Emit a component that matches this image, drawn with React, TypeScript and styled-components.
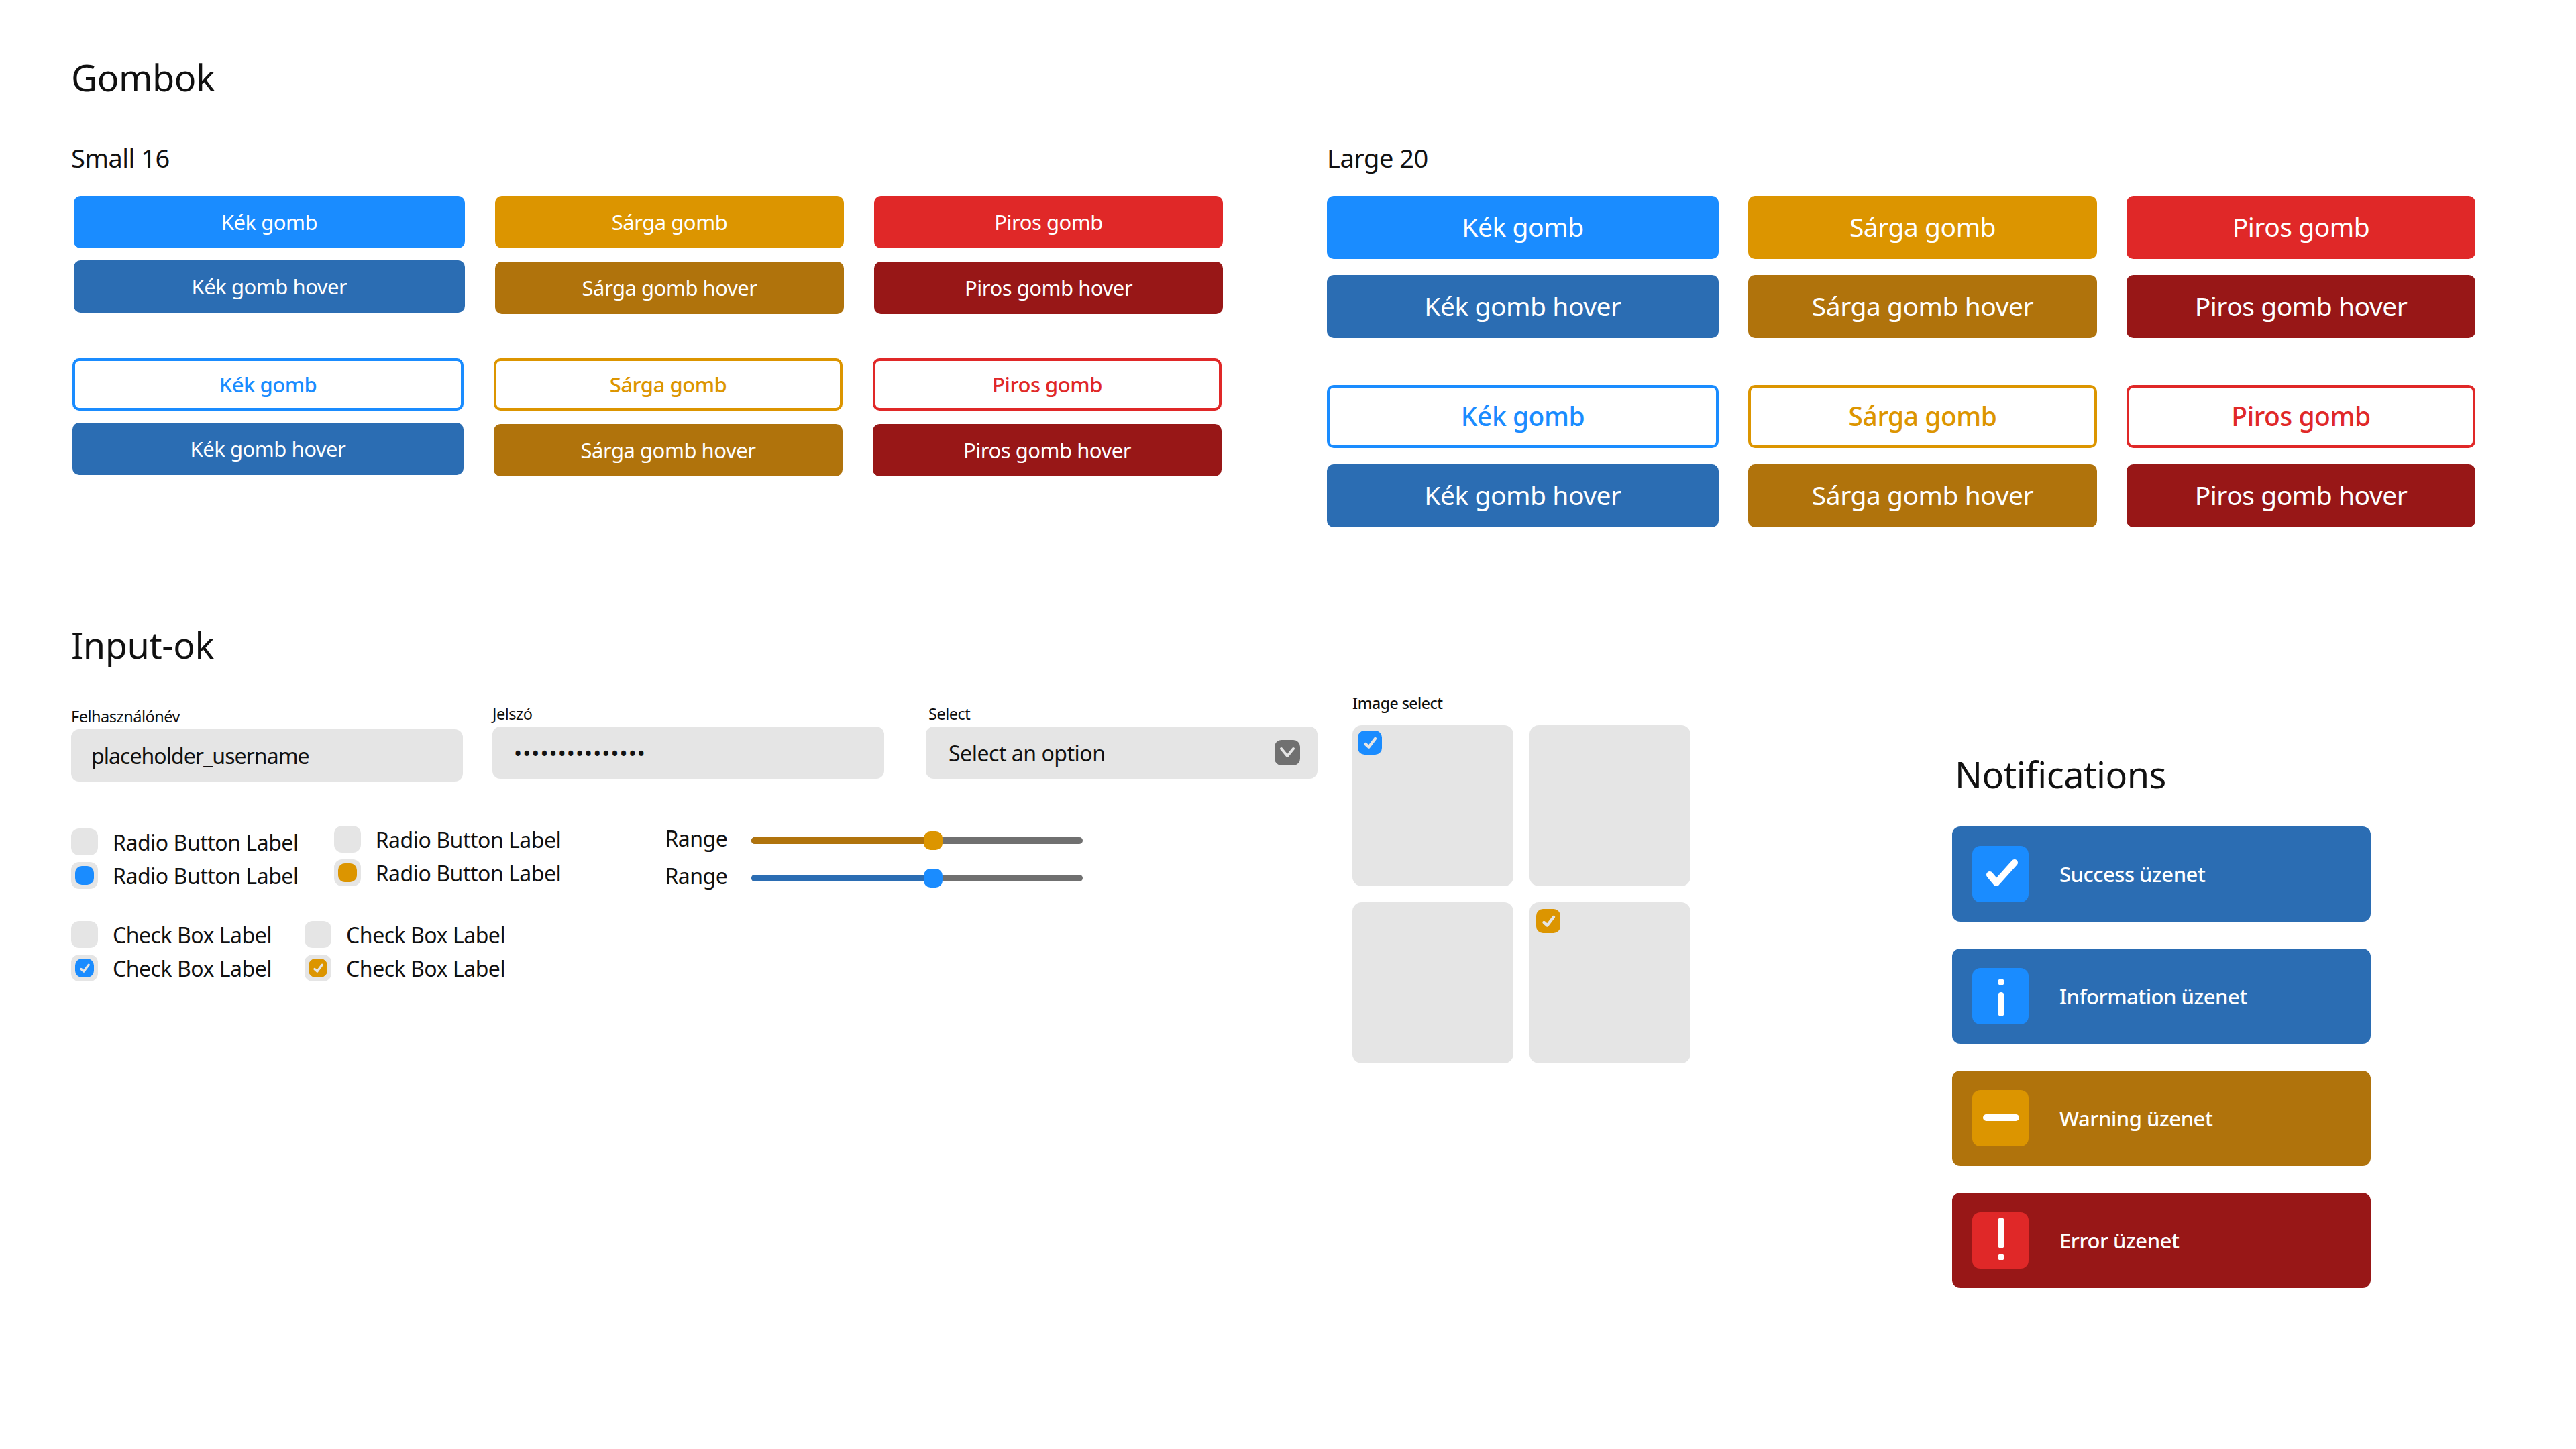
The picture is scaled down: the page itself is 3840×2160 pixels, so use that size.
import { createGlobalStyle, styled } from 'styled-components'

const BLUE = '#1a8cff'
const BLUE_DARK = '#2b6db3'
const YELLOW = '#dc9500'
const YELLOW_DARK = '#b0730c'
const RED = '#e02828'
const RED_DARK = '#981717'
const GRAY = '#e5e5e5'
const TRACK = '#707070'

const GlobalStyle = createGlobalStyle`
  html, body {
    margin: 0;
    background: #fff;
  }
  body {
    font-family: 'Noto Sans', 'Open Sans', sans-serif;
    color: #111;
    letter-spacing: -0.03em;
  }
  * {
    box-sizing: border-box;
  }
`

const Page = styled.div`
  width: 3840px;
  height: 2160px;
  padding-top: 82px;
  overflow: hidden;
`

const Title = styled.h2<{ $left?: number }>`
  margin: 0 0 0 ${(p) => p.$left ?? 106}px;
  font-size: 54px;
  line-height: 66px;
  font-weight: 400;
`

const ButtonArea = styled.div`
  display: flex;
  margin-top: 62px;
`

const SmallColumn = styled.div`
  width: 1872px;
  margin-left: 106px;
`

const LargeColumn = styled.div`
  width: 1712px;
`

const SizeLabel = styled.h3`
  margin: 0 0 32px;
  font-size: 38px;
  line-height: 50px;
  font-weight: 400;
`

const ButtonGroup = styled.div<{ $gap: number; $shift?: number; $top?: number }>`
  display: flex;
  gap: ${(p) => p.$gap}px;
  margin-left: ${(p) => p.$shift ?? 0}px;
  margin-top: ${(p) => p.$top ?? 0}px;
`

const ButtonStack = styled.div<{ $gap: number }>`
  display: flex;
  flex-direction: column;
  gap: ${(p) => p.$gap}px;
`

const Button = styled.button<{ $w: number; $h: number; $size: number; $bg: string; $outline?: boolean }>`
  width: ${(p) => p.$w}px;
  height: ${(p) => p.$h}px;
  padding: 0 0 ${(p) => (p.$size > 32 ? 3 : 0)}px;
  border: 4px solid ${(p) => p.$bg};
  border-radius: 10px;
  background: ${(p) => (p.$outline ? '#fff' : p.$bg)};
  color: ${(p) => (p.$outline ? p.$bg : '#fff')};
  font-family: inherit;
  letter-spacing: inherit;
  font-size: ${(p) => p.$size}px;
  font-weight: ${(p) => (p.$outline ? 500 : 400)};
`

const InputTitleWrap = styled.div`
  margin-top: 142px;
`

const LowerRow = styled.div`
  display: flex;
  align-items: flex-start;
  margin-top: 31px;
`

const Controls = styled.div`
  width: 1910px;
  margin-left: 106px;
  padding-top: 24px;
`

const Fields = styled.div`
  display: flex;
  align-items: flex-start;
`

const Field = styled.div<{ $left?: number; $top?: number; $labelLeft?: number }>`
  width: 584px;
  margin-left: ${(p) => p.$left ?? 0}px;
  margin-top: ${(p) => p.$top ?? 0}px;
  label {
    margin-left: ${(p) => p.$labelLeft ?? 0}px;
  }
`

const FieldLabel = styled.label`
  display: block;
  height: 30px;
  margin-bottom: 4px;
  font-size: 23.5px;
  line-height: 30px;
`

const TextInput = styled.input<{ $dots?: boolean }>`
  display: block;
  width: 100%;
  height: 78px;
  padding: 0 0 0 ${(p) => (p.$dots ? 32 : 30)}px;
  border: 0;
  border-radius: 12px;
  outline: 0;
  background: ${GRAY};
  color: #111;
  font-family: inherit;
  font-size: 32px;
  letter-spacing: ${(p) => (p.$dots ? '1.1px' : '-0.03em')};
`

const SelectBox = styled.div`
  display: flex;
  align-items: center;
  justify-content: space-between;
  height: 78px;
  padding: 0 26px 0 34px;
  border-radius: 12px;
  background: ${GRAY};
  font-size: 32px;
`

const SelectArrow = styled.span`
  display: flex;
  align-items: center;
  justify-content: center;
  width: 38px;
  height: 38px;
  border-radius: 10px;
  background: ${TRACK};
`

const OptionRows = styled.div`
  display: flex;
  align-items: flex-start;
`

const OptionColumn = styled.div<{ $left?: number; $top: number }>`
  display: flex;
  flex-direction: column;
  gap: 10px;
  margin-left: ${(p) => p.$left ?? 0}px;
  margin-top: ${(p) => p.$top}px;
`

const OptionRow = styled.div`
  display: flex;
  align-items: center;
  gap: 22px;
  height: 40px;
  font-size: 32px;
  white-space: nowrap;
`

const OptionBox = styled.span`
  display: flex;
  align-items: center;
  justify-content: center;
  flex: none;
  width: 40px;
  height: 40px;
  border-radius: 12px;
  background: ${GRAY};
`

const OptionInner = styled.span<{ $color: string }>`
  display: flex;
  align-items: center;
  justify-content: center;
  width: 28px;
  height: 28px;
  border-radius: 10px;
  background: ${(p) => p.$color};
`

const RangeColumn = styled.div`
  display: flex;
  flex-direction: column;
  gap: 16px;
  margin-left: 155px;
  margin-top: 68px;
`

const RangeRow = styled.div`
  display: flex;
  align-items: center;
  gap: 36px;
  height: 40px;
  font-size: 32px;
`

const RangeName = styled.span`
  margin-top: -8px;
`

const RangeTrack = styled.div`
  position: relative;
  width: 494px;
  height: 10px;
  border-radius: 5px;
  background: ${TRACK};
`

const RangeFill = styled.div<{ $value: number; $color: string }>`
  width: ${(p) => p.$value}%;
  height: 100%;
  border-radius: 5px 0 0 5px;
  background: ${(p) => p.$color};
`

const RangeThumb = styled.div<{ $value: number; $color: string }>`
  position: absolute;
  top: -9px;
  left: ${(p) => p.$value}%;
  width: 28px;
  height: 28px;
  border-radius: 10px;
  background: ${(p) => p.$color};
`

const ImageSelect = styled.div`
  width: 504px;
  margin-top: 8px;
`

const ImageLabel = styled.div`
  height: 30px;
  margin-bottom: 18px;
  font-size: 23px;
  line-height: 30px;
  font-weight: 500;
`

const ImageGrid = styled.div`
  display: grid;
  grid-template-columns: 240px 240px;
  gap: 24px;
`

const ImageCard = styled.div<{ $inset?: number }>`
  width: 240px;
  height: 240px;
  padding: ${(p) => p.$inset ?? 0}px;
  border-radius: 14px;
  background: ${GRAY};
`

const ImageCheck = styled.span<{ $color: string }>`
  display: flex;
  align-items: center;
  justify-content: center;
  width: 36px;
  height: 36px;
  border-radius: 10px;
  background: ${(p) => p.$color};
`

const NotificationColumn = styled.div`
  width: 624px;
  margin-left: 390px;
  margin-top: 96px;
`

const NotificationTitle = styled(Title)`
  margin: 0 0 45px 4px;
`

const NotificationList = styled.div`
  display: flex;
  flex-direction: column;
  gap: 40px;
`

const Notification = styled.div<{ $bg: string }>`
  display: flex;
  align-items: center;
  gap: 46px;
  height: 142px;
  padding: 0 30px;
  border-radius: 12px;
  background: ${(p) => p.$bg};
  color: #fff;
  font-size: 31px;
  font-weight: 500;
`

const NotificationIcon = styled.span<{ $bg: string }>`
  display: block;
  flex: none;
  width: 84px;
  height: 84px;
  border-radius: 12px;
  background: ${(p) => p.$bg};
  svg {
    display: block;
  }
`

const smallColumns = [
  { width: 583, color: BLUE, dark: BLUE_DARK, name: 'Kék gomb' },
  { width: 520, color: YELLOW, dark: YELLOW_DARK, name: 'Sárga gomb' },
  { width: 520, color: RED, dark: RED_DARK, name: 'Piros gomb' },
]

const largeColumns = [
  { width: 584, color: BLUE, dark: BLUE_DARK, name: 'Kék gomb' },
  { width: 520, color: YELLOW, dark: YELLOW_DARK, name: 'Sárga gomb' },
  { width: 520, color: RED, dark: RED_DARK, name: 'Piros gomb' },
]

const SmallCheck = ({ size }: { size: number }) => (
  <svg width={size} height={size} viewBox="0 0 36 36" fill="none">
    <path d="M11.5 20l5 4.5L26 12" stroke={GRAY} strokeWidth="4.4" strokeLinecap="round" strokeLinejoin="round" />
  </svg>
)

const App = () => {
  return (
    <Page>
      <GlobalStyle />
      <Title>Gombok</Title>
      <ButtonArea>
        <SmallColumn>
          <SizeLabel>Small 16</SizeLabel>
          <ButtonGroup $gap={45} $shift={4}>
            {smallColumns.map((col, idx) => (
              <ButtonStack key={col.name} $gap={idx === 0 ? 18 : 20}>
                <Button $w={col.width} $h={78} $size={31} $bg={col.color}>{col.name}</Button>
                <Button $w={col.width} $h={78} $size={31} $bg={col.dark}>{col.name} hover</Button>
              </ButtonStack>
            ))}
          </ButtonGroup>
          <ButtonGroup $gap={45} $shift={2} $top={66}>
            {smallColumns.map((col, idx) => (
              <ButtonStack key={col.name} $gap={idx === 0 ? 18 : 20}>
                <Button $w={col.width} $h={78} $size={31} $bg={col.color} $outline>{col.name}</Button>
                <Button $w={col.width} $h={78} $size={31} $bg={col.dark}>{col.name} hover</Button>
              </ButtonStack>
            ))}
          </ButtonGroup>
        </SmallColumn>
        <LargeColumn>
          <SizeLabel>Large 20</SizeLabel>
          <ButtonGroup $gap={44}>
            {largeColumns.map((col) => (
              <ButtonStack key={col.name} $gap={24}>
                <Button $w={col.width} $h={94} $size={39} $bg={col.color}>{col.name}</Button>
                <Button $w={col.width} $h={94} $size={39} $bg={col.dark}>{col.name} hover</Button>
              </ButtonStack>
            ))}
          </ButtonGroup>
          <ButtonGroup $gap={44} $top={70}>
            {largeColumns.map((col) => (
              <ButtonStack key={col.name} $gap={24}>
                <Button $w={col.width} $h={94} $size={39} $bg={col.color} $outline>{col.name}</Button>
                <Button $w={col.width} $h={94} $size={39} $bg={col.dark}>{col.name} hover</Button>
              </ButtonStack>
            ))}
          </ButtonGroup>
        </LargeColumn>
      </ButtonArea>

      <InputTitleWrap>
        <Title>Input-ok</Title>
      </InputTitleWrap>
      <LowerRow>
        <Controls>
          <Fields>
            <Field $top={4}>
              <FieldLabel>Felhasználónév</FieldLabel>
              <TextInput defaultValue="placeholder_username" readOnly />
            </Field>
            <Field $left={44}>
              <FieldLabel>Jelszó</FieldLabel>
              <TextInput type="password" defaultValue="placeholder_pas" $dots readOnly />
            </Field>
            <Field $left={62} $labelLeft={4}>
              <FieldLabel>Select</FieldLabel>
              <SelectBox>
                Select an option
                <SelectArrow>
                  <svg width="24" height="18" viewBox="0 0 24 18" fill="none">
                    <path d="M3 3l9 11 9-11" stroke={GRAY} strokeWidth="4" strokeLinecap="round" strokeLinejoin="round" />
                  </svg>
                </SelectArrow>
              </SelectBox>
            </Field>
          </Fields>
          <OptionRows>
            <OptionColumn $top={70}>
              <OptionRow><OptionBox />Radio Button Label</OptionRow>
              <OptionRow><OptionBox><OptionInner $color={BLUE} /></OptionBox>Radio Button Label</OptionRow>
            </OptionColumn>
            <OptionColumn $left={53} $top={66}>
              <OptionRow><OptionBox />Radio Button Label</OptionRow>
              <OptionRow><OptionBox><OptionInner $color={YELLOW} /></OptionBox>Radio Button Label</OptionRow>
            </OptionColumn>
            <RangeColumn>
              <RangeRow>
                <RangeName>Range</RangeName>
                <RangeTrack>
                  <RangeFill $value={52} $color={YELLOW_DARK} />
                  <RangeThumb $value={52} $color={YELLOW} />
                </RangeTrack>
              </RangeRow>
              <RangeRow>
                <RangeName>Range</RangeName>
                <RangeTrack>
                  <RangeFill $value={52} $color={BLUE_DARK} />
                  <RangeThumb $value={52} $color={BLUE} />
                </RangeTrack>
              </RangeRow>
            </RangeColumn>
          </OptionRows>
          <OptionRows>
            <OptionColumn $top={44}>
              <OptionRow><OptionBox />Check Box Label</OptionRow>
              <OptionRow><OptionBox><OptionInner $color={BLUE}><SmallCheck size={28} /></OptionInner></OptionBox>Check Box Label</OptionRow>
            </OptionColumn>
            <OptionColumn $left={49} $top={44}>
              <OptionRow><OptionBox />Check Box Label</OptionRow>
              <OptionRow><OptionBox><OptionInner $color={YELLOW}><SmallCheck size={28} /></OptionInner></OptionBox>Check Box Label</OptionRow>
            </OptionColumn>
          </OptionRows>
        </Controls>
        <ImageSelect>
          <ImageLabel>Image select</ImageLabel>
          <ImageGrid>
            <ImageCard $inset={8}><ImageCheck $color={BLUE}><SmallCheck size={36} /></ImageCheck></ImageCard>
            <ImageCard />
            <ImageCard />
            <ImageCard $inset={10}><ImageCheck $color={YELLOW}><SmallCheck size={36} /></ImageCheck></ImageCard>
          </ImageGrid>
        </ImageSelect>
        <NotificationColumn>
          <NotificationTitle>Notifications</NotificationTitle>
          <NotificationList>
            <Notification $bg={BLUE_DARK}>
              <NotificationIcon $bg={BLUE}>
                <svg width="84" height="84" viewBox="0 0 84 84" fill="none">
                  <path d="M26 43l10 12 27-30" stroke="#fff" strokeWidth="10" strokeLinecap="round" strokeLinejoin="round" />
                </svg>
              </NotificationIcon>
              Success üzenet
            </Notification>
            <Notification $bg={BLUE_DARK}>
              <NotificationIcon $bg={BLUE}>
                <svg width="84" height="84" viewBox="0 0 84 84" fill="none">
                  <circle cx="43" cy="21" r="5" fill="#fff" />
                  <path d="M43 41v26" stroke="#fff" strokeWidth="10" strokeLinecap="round" />
                </svg>
              </NotificationIcon>
              Information üzenet
            </Notification>
            <Notification $bg={YELLOW_DARK}>
              <NotificationIcon $bg={YELLOW}>
                <svg width="84" height="84" viewBox="0 0 84 84" fill="none">
                  <path d="M21 41h44" stroke="#fff" strokeWidth="10" strokeLinecap="round" />
                </svg>
              </NotificationIcon>
              Warning üzenet
            </Notification>
            <Notification $bg={RED_DARK}>
              <NotificationIcon $bg={RED}>
                <svg width="84" height="84" viewBox="0 0 84 84" fill="none">
                  <path d="M43 13v36" stroke="#fff" strokeWidth="10" strokeLinecap="round" />
                  <circle cx="43" cy="67" r="5" fill="#fff" />
                </svg>
              </NotificationIcon>
              Error üzenet
            </Notification>
          </NotificationList>
        </NotificationColumn>
      </LowerRow>
    </Page>
  )
}

export default App
